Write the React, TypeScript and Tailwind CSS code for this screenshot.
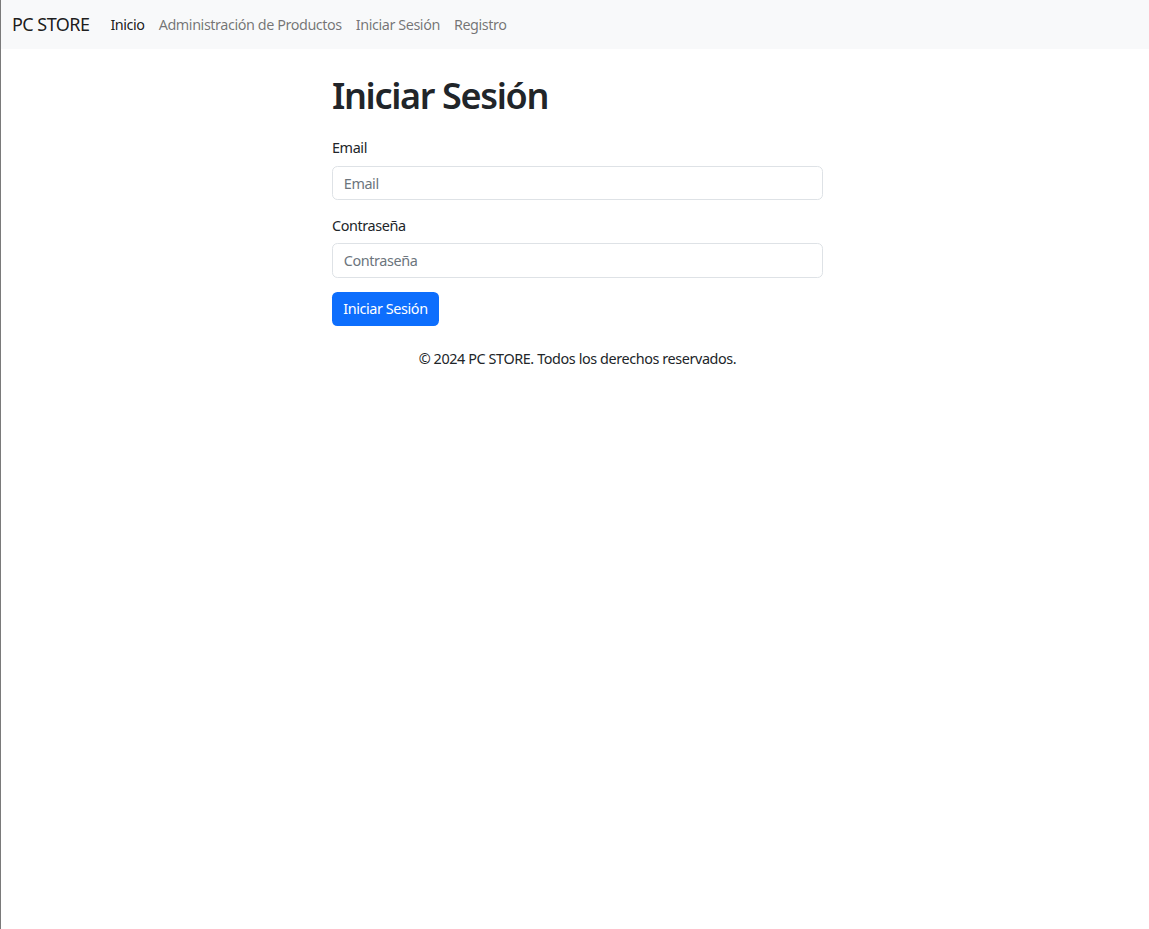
import React from 'react';

const navLinks = [
  { label: 'Inicio', active: true },
  { label: 'Administración de Productos', active: false },
  { label: 'Iniciar Sesión', active: false },
  { label: 'Registro', active: false },
];

const Field: React.FC<{ label: string; type: string }> = ({ label, type }) => (
  <div className="mb-[14.4px]">
    <label className="block mb-[7.2px] text-[14.4px] leading-[21.6px] tracking-[-0.028em] text-[#212529]">{label}</label>
    <input
      type={type}
      placeholder={label}
      className="block w-full h-[34.2px] px-[10.8px] py-[5.4px] text-[14.4px] leading-[21.6px] tracking-[-0.028em] text-[#212529] bg-white border border-[#dee2e6] rounded-[5.4px] outline-none placeholder:text-[#6c757d]"
    />
  </div>
);

export default function App() {
  return (
    <div className="min-h-screen bg-white border-l border-[#7a7a7a] font-['Noto_Sans',sans-serif] text-[#212529]">
      {/* Navbar */}
      <nav className="h-[49px] bg-[#f8f9fa] flex items-center pl-[11px]">
        <a href="#" className="text-[18px] leading-[27px] tracking-[-0.03em] text-black/90 mr-[14px]">
          PC STORE
        </a>
        <ul className="flex items-center">
          {navLinks.map((l) => (
            <li key={l.label}>
              <a
                href="#"
                className={`block px-[7px] text-[14.4px] leading-[21.6px] tracking-[-0.03em] ${l.active ? 'text-black/90' : 'text-black/55'}`}
              >
                {l.label}
              </a>
            </li>
          ))}
        </ul>
      </nav>

      {/* Contenido */}
      <main className="ml-[331px] w-[491px] pt-[25px]">
        <h1 className="text-[36px] leading-[43.2px] font-semibold tracking-[-0.037em] mb-[20px]">Iniciar Sesión</h1>
        <form>
          <Field label="Email" type="email" />
          <Field label="Contraseña" type="password" />
          <button
            type="button"
            className="h-[34.2px] px-[11.2px] text-[14.4px] leading-[21.6px] tracking-[-0.028em] text-white bg-[#0d6efd] rounded-[5.4px]"
          >
            Iniciar Sesión
          </button>
        </form>
        <footer className="mt-[21.6px] text-center text-[14.4px] leading-[21.6px] tracking-[-0.028em]">
          © 2024 PC STORE. Todos los derechos reservados.
        </footer>
      </main>
    </div>
  );
}
